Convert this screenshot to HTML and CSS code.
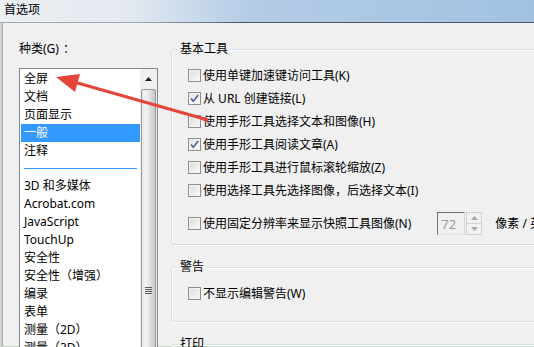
FILE: index.html
```html
<!DOCTYPE html>
<html lang="zh-CN">
<head>
    <meta charset="UTF-8">
    <title>首选项</title>
    <link rel="stylesheet" href="styles.css">
</head>
<body>

<div class="titlebar"><span class="title">首选项</span></div>

<div class="window">
    <aside class="sidebar">
        <div class="cat-label">种类(G)<span class="colon">：</span></div>
        <div class="listbox">
            <ul class="items">
                <li>全屏</li>
                <li>文档</li>
                <li>页面显示</li>
                <li class="selected">一般</li>
                <li>注释</li>
                <li class="sep"></li>
                <li>3D 和多媒体</li>
                <li>Acrobat.com</li>
                <li>JavaScript</li>
                <li>TouchUp</li>
                <li>安全性</li>
                <li>安全性（增强）</li>
                <li>编录</li>
                <li>表单</li>
                <li>测量（2D）</li>
                <li>测量（3D）</li>
            </ul>
            <div class="scrollbar">
                <div class="sb-up">
                    <svg width="7" height="4" viewBox="0 0 7 4"><path d="M0 4 L3.5 0 L7 4 Z" fill="#222"/></svg>
                </div>
                <div class="sb-thumb"><span class="grip"></span></div>
            </div>
        </div>
    </aside>

    <main class="panel">
        <fieldset class="group group-basic">
            <legend>基本工具</legend>
            <label class="check"><span class="box"></span>使用单键加速键访问工具(K)</label>
            <label class="check"><span class="box checked"><svg width="11" height="11" viewBox="0 0 11 11"><path d="M2 5.5 L4.3 8.3 L9.2 2" fill="none" stroke="#4b5f96" stroke-width="1.5"/></svg></span>从 URL 创建链接(L)</label>
            <label class="check"><span class="box"></span>使用手形工具选择文本和图像(H)</label>
            <label class="check"><span class="box checked"><svg width="11" height="11" viewBox="0 0 11 11"><path d="M2 5.5 L4.3 8.3 L9.2 2" fill="none" stroke="#4b5f96" stroke-width="1.5"/></svg></span>使用手形工具阅读文章(A)</label>
            <label class="check"><span class="box"></span>使用手形工具进行鼠标滚轮缩放(Z)</label>
            <label class="check"><span class="box"></span>使用选择工具先选择图像，后选择文本(I)</label>
            <div class="check spin-row">
                <span class="box"></span>使用固定分辨率来显示快照工具图像(N)
                <span class="spin-input">72</span>
                <span class="spin-btns">
                    <span class="spin-btn"><svg width="7" height="4" viewBox="0 0 7 4"><path d="M0 4 L3.5 0 L7 4 Z" fill="#a8a8a8"/></svg></span>
                    <span class="spin-btn"><svg width="7" height="4" viewBox="0 0 7 4"><path d="M0 0 L3.5 4 L7 0 Z" fill="#a8a8a8"/></svg></span>
                </span>
                <span class="unit">像素 / 英寸</span>
            </div>
        </fieldset>

        <fieldset class="group group-warn">
            <legend>警告</legend>
            <label class="check"><span class="box"></span>不显示编辑警告(W)</label>
        </fieldset>

        <fieldset class="group group-print">
            <legend>打印</legend>
        </fieldset>
    </main>
</div>

<!-- red annotation arrow -->
<svg class="arrow" width="534" height="347" viewBox="0 0 534 347">
    <line x1="208" y1="120" x2="74" y2="82" stroke="#e5443a" stroke-width="3"/>
    <polygon points="56,77 80,74 75,92" fill="#e5443a"/>
</svg>

</body>
</html>
```

FILE: styles.css
```css
body {
    margin: 0;
    width: 534px;
    height: 347px;
    overflow: hidden;
    position: relative;
    background-color: #cdd6cd;
    font-family: "Noto Sans", "Noto Sans CJK SC", sans-serif;
    font-size: 12px;
    line-height: 18px;
    color: #000;
}
.titlebar {
    height: 23px;
    box-sizing: border-box;
    padding: 0 0 3px 4px;
    display: flex;
    align-items: center;
    border-bottom: 1px solid;
    border-image: linear-gradient(90deg, #a3abb4 0, #a3abb4 140px, #4d5b69 240px) 1;
    background: linear-gradient(90deg, #eceff3 0, #e3e9f0 130px, #b3cce6 250px, #a2c1e1 100%);
}
.window {
    display: flex;
    margin-left: 2px;
    height: 323px;
    border-left: 1px solid #a9a9a9;
    background-color: #f0f0f0;
}
.sidebar {
    width: 168px;
    flex-shrink: 0;
    box-sizing: border-box;
    padding: 17px 0 0 16px;
}
.cat-label {
    margin-bottom: 10px;
}
.colon {
    padding-left: 4px;
}
.listbox {
    width: 139px;
    height: 300px;
    box-sizing: border-box;
    border: 1px solid #828790;
    background-color: #fff;
    display: flex;
}
.items {
    flex: 1;
    list-style: none;
    margin: 0;
    padding: 1px 0 0;
}
.items li {
    height: 18px;
    padding-left: 4px;
    white-space: nowrap;
}
.items li.selected {
    margin-left: 1px;
    padding-left: 3px;
    background-color: #3399ff;
    color: #fff;
}
.items li.sep {
    height: 17px;
    display: flex;
    align-items: center;
    padding-right: 3px;
}
.items li.sep::before {
    content: "";
    flex: 1;
    height: 1px;
    background-color: #3399ff;
}
.scrollbar {
    width: 17px;
    display: flex;
    flex-direction: column;
    background-color: #f0f0f0;
}
.sb-up {
    height: 20px;
    display: flex;
    align-items: center;
    justify-content: center;
}
.sb-thumb {
    flex: 1;
    margin: 0 1px;
    border: 1px solid #979797;
    border-radius: 2px;
    background: linear-gradient(90deg, #e6e6e6, #f4f4f4 30%, #dedede 65%, #c9c9c9);
    display: flex;
    justify-content: center;
    padding-top: 197px;
}
.grip {
    width: 7px;
    height: 7px;
    background: repeating-linear-gradient(180deg, #5c5c5c 0 1px, transparent 1px 2px);
}
.panel {
    flex: 1;
    padding-top: 17px;
}
.group {
    width: 430px;
    margin: 0;
    border: 1px solid #d5dfe5;
    border-radius: 3px;
    box-shadow: inset 1px 1px 0 #fff, 1px 1px 0 #fff;
    padding: 6px 0 9px 16px;
}
.group legend {
    padding: 0 2px;
    margin-left: -10px;
}
.group-warn {
    margin-top: 13px;
    padding: 6px 0 16px 16px;
}
.group-print {
    margin-top: 13px;
    height: 40px;
}
.check {
    height: 23px;
    display: flex;
    align-items: center;
    white-space: nowrap;
}
.box {
    width: 13px;
    height: 13px;
    box-sizing: border-box;
    margin-right: 2px;
    border: 1px solid #8e8f8f;
    background: linear-gradient(135deg, #dcdcdc, #fafafa);
    box-shadow: inset 0 0 0 1px #f3f3f3;
    display: flex;
    align-items: center;
    justify-content: center;
}
.box.checked {
    background: linear-gradient(135deg, #e2e2e2, #fdfdfd);
}
.spin-row {
    margin-top: 10px;
}
.spin-input {
    width: 28px;
    height: 23px;
    box-sizing: border-box;
    margin-left: 26px;
    padding: 1px 0 0 3px;
    border: 1px solid;
    border-color: #6f6f6f #d9d9d9 #e3e3e3 #6f6f6f;
    color: #9c9c9c;
    font-size: 13px;
    line-height: 20px;
}
.spin-btns {
    width: 16px;
    height: 23px;
    margin-left: 1px;
    display: flex;
    flex-direction: column;
}
.spin-btn {
    flex: 1;
    border: 1px solid #d0d0d0;
    background-color: #f2f2f2;
    display: flex;
    align-items: center;
    justify-content: center;
}
.spin-btn + .spin-btn {
    border-top: none;
}
.unit {
    margin-left: 13px;
}
.arrow {
    position: absolute;
    top: 0;
    left: 0;
    pointer-events: none;
}
```
